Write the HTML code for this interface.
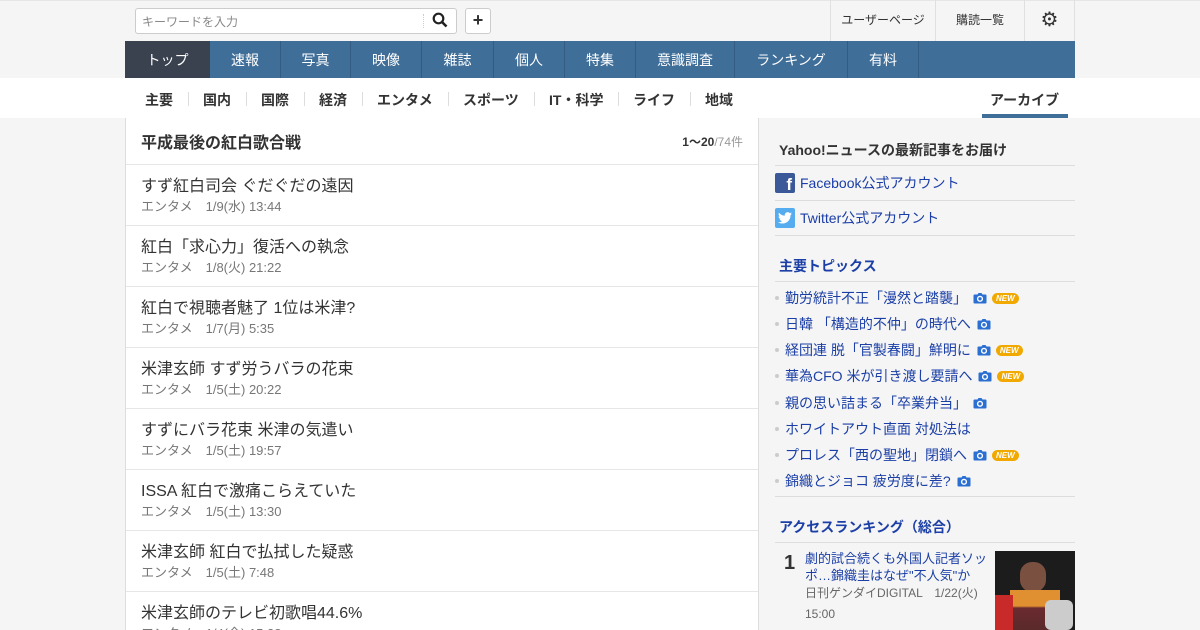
<!DOCTYPE html><html><head><meta charset="utf-8"><style>
*{margin:0;padding:0;box-sizing:border-box}
html{width:1200px;height:630px;overflow:hidden}
body{width:1200px;height:630px;overflow:hidden;background:#f5f5f5;font-family:"Liberation Sans","Noto Sans CJK JP",sans-serif;color:#333;position:relative}
.a{position:absolute}
.top{left:0;top:0;width:1200px;height:41px;background:#f5f5f5;border-top:1px solid #e6e6e6}
.search{left:135px;top:8px;width:322px;height:26px;background:#fff;border:1px solid #ccc;border-radius:3px;font-size:12px;color:#888;padding:4px 6px}
.plus{left:465px;top:8px;width:26px;height:26px;background:#fff;border:1px solid #ccc;border-radius:3px;font-size:18px;font-weight:bold;text-align:center;line-height:23px}
.tl{top:0;height:41px;border-left:1px solid #e0e0e0;font-size:12px;line-height:40px;text-align:center;color:#333}
.nav{left:125px;top:41px;width:950px;height:37px;background:#3f6e99}
.nav span{position:absolute;top:0;height:37px;line-height:39px;text-align:center;color:#fff;font-size:14px;border-right:1px solid #345c82}
.sub{left:0;top:78px;width:1200px;height:40px;background:#fff}
.sub span{position:absolute;top:12px;font-size:14px;font-weight:bold;color:#333}
.sep{position:absolute;top:14px;width:1px;height:14px;background:#ddd}
.main{left:125px;top:118px;width:634px;height:520px;background:#fff;border:1px solid #ddd;border-top:none}
.it{position:absolute;left:0;width:632px;height:61px;border-top:1px solid #e6e6e6}
.it b{position:absolute;left:15px;top:7px;font-weight:normal;font-size:16px;color:#333}
.it i{position:absolute;left:15px;top:31px;font-style:normal;font-size:13px;color:#777}
.sd{font-size:14px;color:#1a3da8}
.hl{position:absolute;left:775px;width:300px;height:1px;background:#ddd}
.tp{position:absolute;left:775px;font-size:14px;color:#1b3fa6}
.tp:before{content:"";position:absolute;left:0;top:8px;width:4px;height:4px;background:#ccc;border-radius:2px}
.tp span{margin-left:10px}
.cam{display:inline-block;width:14px;height:12px;margin-left:6px;vertical-align:-1px}
.new{display:inline-block;background:#f1a900;color:#fff;font-size:8px;font-weight:bold;border-radius:6px;padding:1px 4px;margin-left:5px;vertical-align:2px}
</style></head><body>
<svg width="0" height="0" style="position:absolute"><defs><symbol id="c" viewBox="0 0 14 12"><path d="M1.5 2.5h3l1-1.5h3l1 1.5h3a1 1 0 0 1 1 1v7a1 1 0 0 1-1 1h-11a1 1 0 0 1-1-1v-7a1 1 0 0 1 1-1z" fill="#2a6fd1"/><circle cx="7" cy="6.8" r="2.4" fill="none" stroke="#fff" stroke-width="1.4"/></symbol></defs></svg>
<div class="a top"></div>
<div class="a search">キーワードを入力</div>
<div class="a" style="left:423px;top:14px;width:1px;height:14px;border-left:1px dotted #ccc"></div>
<svg class="a" style="left:432px;top:12px" width="16" height="16" viewBox="0 0 16 16"><circle cx="6.5" cy="6.5" r="4.8" fill="none" stroke="#222" stroke-width="2.2"/><path d="M10 10l4.5 4.5" stroke="#222" stroke-width="2.6"/></svg>
<div class="a plus">+</div>
<div class="a tl" style="left:830px;width:105px">ユーザーページ</div>
<div class="a tl" style="left:935px;width:89px">購読一覧</div>
<div class="a tl" style="left:1024px;width:51px;border-right:1px solid #e0e0e0;font-size:20px;color:#333">⚙</div>
<div class="a nav">
<span style="left:0;width:85px;background:#3a4250;border:none">トップ</span>
<span style="left:85px;width:71px">速報</span><span style="left:156px;width:70px">写真</span><span style="left:226px;width:71px">映像</span><span style="left:297px;width:72px">雑誌</span><span style="left:369px;width:71px">個人</span><span style="left:440px;width:71px">特集</span><span style="left:511px;width:99px">意識調査</span><span style="left:610px;width:113px">ランキング</span><span style="left:723px;width:71px">有料</span>
</div>
<div class="a sub">
<span style="left:145px">主要</span><i class="sep" style="left:188px"></i>
<span style="left:203px">国内</span><i class="sep" style="left:246px"></i>
<span style="left:261px">国際</span><i class="sep" style="left:304px"></i>
<span style="left:319px">経済</span><i class="sep" style="left:362px"></i>
<span style="left:377px">エンタメ</span><i class="sep" style="left:448px"></i>
<span style="left:463px">スポーツ</span><i class="sep" style="left:534px"></i>
<span style="left:549px">IT・科学</span><i class="sep" style="left:618px"></i>
<span style="left:633px">ライフ</span><i class="sep" style="left:690px"></i>
<span style="left:705px">地域</span>
<span style="left:990px">アーカイブ</span>
<div style="position:absolute;left:982px;top:36px;width:86px;height:4px;background:#3f6e99"></div>
</div>
<div class="a main">
<div style="position:absolute;left:15px;top:11px;font-size:16px;font-weight:bold">平成最後の紅白歌合戦</div>
<div style="position:absolute;right:15px;top:15px;font-size:12px"><b>1～20</b><span style="color:#999">/74件</span></div>
<div class="it" style="top:46px"><b>すず紅白司会 ぐだぐだの遠因</b><i>エンタメ　1/9(水) 13:44</i></div>
<div class="it" style="top:107px"><b>紅白「求心力」復活への執念</b><i>エンタメ　1/8(火) 21:22</i></div>
<div class="it" style="top:168px"><b>紅白で視聴者魅了 1位は米津?</b><i>エンタメ　1/7(月) 5:35</i></div>
<div class="it" style="top:229px"><b>米津玄師 すず労うバラの花束</b><i>エンタメ　1/5(土) 20:22</i></div>
<div class="it" style="top:290px"><b>すずにバラ花束 米津の気遣い</b><i>エンタメ　1/5(土) 19:57</i></div>
<div class="it" style="top:351px"><b>ISSA 紅白で激痛こらえていた</b><i>エンタメ　1/5(土) 13:30</i></div>
<div class="it" style="top:412px"><b>米津玄師 紅白で払拭した疑惑</b><i>エンタメ　1/5(土) 7:48</i></div>
<div class="it" style="top:473px"><b>米津玄師のテレビ初歌唱44.6%</b><i>エンタメ　1/4(金) 15:28</i></div>
</div>
<div class="a" style="left:779px;top:140px;font-size:14px;font-weight:bold;color:#333">Yahoo!ニュースの最新記事をお届け</div>
<div class="hl" style="top:165px"></div>
<div class="a" style="left:775px;top:173px;width:20px;height:20px;background:#3b5998;border-radius:2px;color:#fff;font-weight:bold;font-size:17px;text-align:right;padding-right:3px;line-height:23px">f</div>
<div class="a sd" style="left:800px;top:173px">Facebook公式アカウント</div>
<div class="hl" style="top:200px"></div>
<div class="a" style="left:775px;top:208px;width:20px;height:20px;background:#55acee;border-radius:2px"></div>
<svg class="a" style="left:778px;top:212px" width="14" height="12" viewBox="0 0 24 20"><path d="M24 2.4a10 10 0 0 1-2.8.8A5 5 0 0 0 23.3.4a10 10 0 0 1-3.1 1.2A4.9 4.9 0 0 0 11.8 6 14 14 0 0 1 1.7.9a4.9 4.9 0 0 0 1.5 6.6A4.9 4.9 0 0 1 1 6.9a4.9 4.9 0 0 0 3.9 4.8 5 5 0 0 1-2.2.1 4.9 4.9 0 0 0 4.6 3.4A9.9 9.9 0 0 1 0 17.3 14 14 0 0 0 7.5 19.5c9 0 14-7.5 14-14v-.6A10 10 0 0 0 24 2.4z" fill="#fff"/></svg>
<div class="a sd" style="left:800px;top:208px">Twitter公式アカウント</div>
<div class="hl" style="top:235px"></div>
<div class="a" style="left:779px;top:256px;font-size:14px;font-weight:bold;color:#1b3fa6">主要トピックス</div>
<div class="hl" style="top:281px"></div>
<div class="tp" style="top:288px"><span>勤労統計不正「漫然と踏襲」</span><svg class="cam"><use href="#c"/></svg><i class="new">NEW</i></div>
<div class="tp" style="top:314px"><span>日韓 「構造的不仲」の時代へ</span><svg class="cam"><use href="#c"/></svg></div>
<div class="tp" style="top:340px"><span>経団連 脱「官製春闘」鮮明に</span><svg class="cam"><use href="#c"/></svg><i class="new">NEW</i></div>
<div class="tp" style="top:366px"><span>華為CFO 米が引き渡し要請へ</span><svg class="cam"><use href="#c"/></svg><i class="new">NEW</i></div>
<div class="tp" style="top:393px"><span>親の思い詰まる「卒業弁当」</span><svg class="cam"><use href="#c"/></svg></div>
<div class="tp" style="top:419px"><span>ホワイトアウト直面 対処法は</span></div>
<div class="tp" style="top:445px"><span>プロレス「西の聖地」閉鎖へ</span><svg class="cam"><use href="#c"/></svg><i class="new">NEW</i></div>
<div class="tp" style="top:471px"><span>錦織とジョコ 疲労度に差?</span><svg class="cam"><use href="#c"/></svg></div>
<div class="hl" style="top:496px"></div>
<div class="a" style="left:779px;top:517px;font-size:14px;font-weight:bold;color:#1b3fa6">アクセスランキング（総合）</div>
<div class="hl" style="top:542px"></div>
<div class="a" style="left:784px;top:552px;font-size:20px;font-weight:bold;color:#333">1</div>
<div class="a" style="left:805px;top:550px;width:185px;font-size:13px;line-height:17px;color:#1b3fa6">劇的試合続くも外国人記者ソッポ…錦織圭はなぜ"不人気"か</div>
<div class="a" style="left:805px;top:583px;width:185px;font-size:12px;line-height:21px;color:#666">日刊ゲンダイDIGITAL　1/22(火) 15:00</div>
<div class="a" style="left:995px;top:551px;width:80px;height:79px;background:#1c1c1c"></div>
<div class="a" style="left:1020px;top:562px;width:26px;height:30px;background:#7a5040;border-radius:12px"></div>
<div class="a" style="left:1010px;top:590px;width:50px;height:40px;background:linear-gradient(180deg,#e09030 0%,#e09030 40%,#6a2a30 45%,#5a2a2a 100%)"></div>
<div class="a" style="left:995px;top:595px;width:18px;height:35px;background:#c82a2a"></div>
<div class="a" style="left:1045px;top:600px;width:28px;height:30px;background:#ccc;border-radius:6px"></div>
</body></html>
